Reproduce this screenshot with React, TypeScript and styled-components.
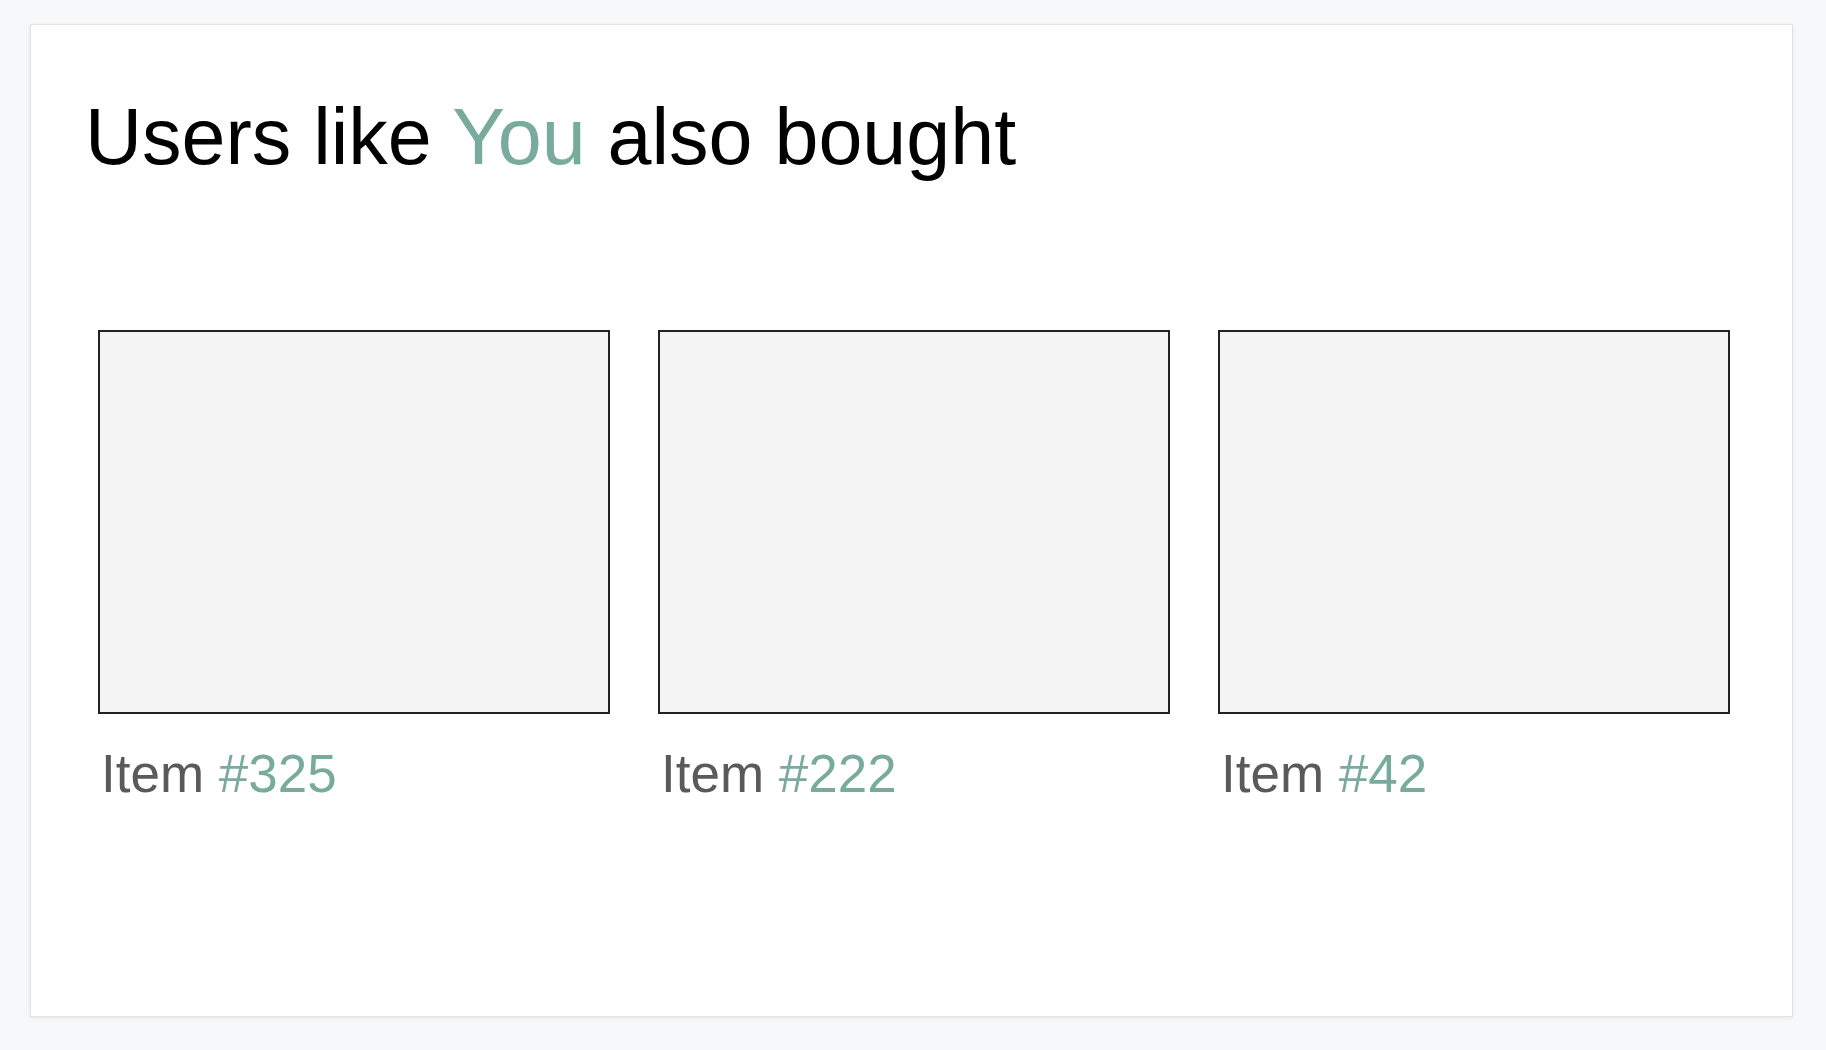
import React from "react";
import styled, { createGlobalStyle } from "styled-components";

const Global = createGlobalStyle`
  html, body { margin: 0; padding: 0; background: #f7f8fa; }
  body { font-family: "Liberation Sans", Arial, Helvetica, sans-serif; }
`;

const Page = styled.div`
  box-sizing: border-box;
  height: 100vh;
  padding: 24px 33px 33px 30px;
  display: flex;
`;

const Card = styled.section`
  flex: 1;
  box-sizing: border-box;
  background: #ffffff;
  border: 1px solid #e2e3e5;
  box-shadow: 0 1px 4px rgba(0, 0, 0, 0.08);
  display: flex;
  flex-direction: column;
`;

const Heading = styled.h1`
  margin: 66px 0 0 54px;
  font-size: 79px;
  font-weight: 400;
  line-height: normal;
  color: #000;
`;

const Accent = styled.span`
  color: #79ab9d;
`;

const Grid = styled.div`
  margin-top: 147px;
  padding-left: 67px;
  display: grid;
  grid-template-columns: repeat(3, 512px);
  column-gap: 48px;
`;

const Item = styled.div`
  display: flex;
  flex-direction: column;
`;

const Thumb = styled.div`
  box-sizing: border-box;
  height: 384px;
  background: #f4f4f4;
  border: 2px solid #222;
`;

const Label = styled.div`
  margin-top: 29px;
  padding-left: 3px;
  font-size: 53px;
  line-height: normal;
  color: #5a5a5a;
`;

const items = [325, 222, 42];

export default function App() {
  return (
    <>
      <Global />
      <Page>
        <Card>
          <Heading>
            Users like <Accent>You</Accent> also bought
          </Heading>
          <Grid>
            {items.map((n) => (
              <Item key={n}>
                <Thumb />
                <Label>
                  Item <Accent>#{n}</Accent>
                </Label>
              </Item>
            ))}
          </Grid>
        </Card>
      </Page>
    </>
  );
}
